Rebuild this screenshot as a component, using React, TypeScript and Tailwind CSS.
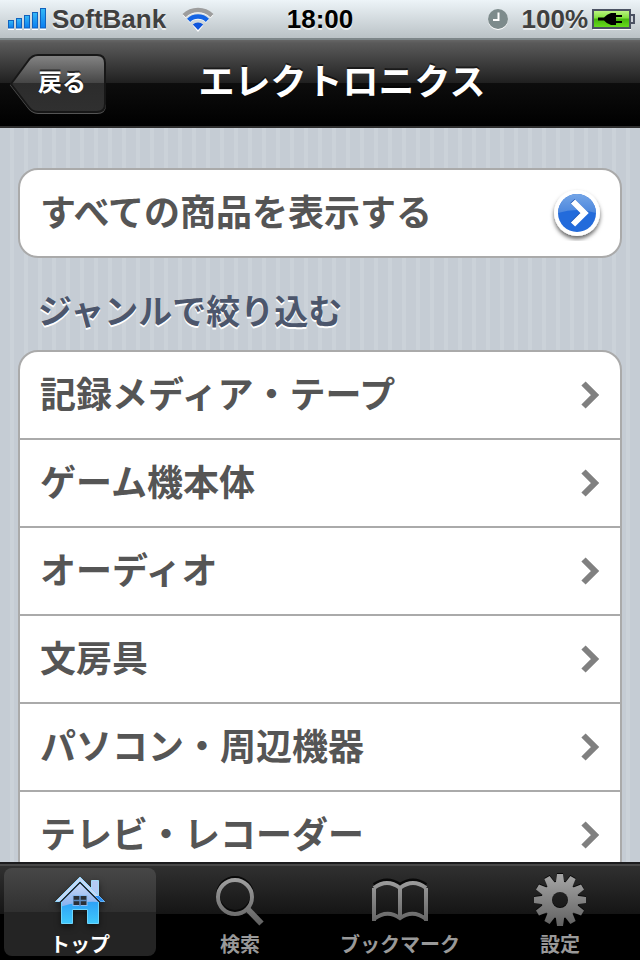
import React, { useState } from 'react';

interface TabItem {
  id: string;
  label: string;
  icon: React.ReactNode;
}

const SignalIcon: React.FC = () => (
  <svg className="h-6 w-10" viewBox="0 0 40 24" aria-hidden="true">
    <defs>
      <linearGradient id="signal" x1="0" y1="0" x2="0" y2="1">
        <stop offset="0" stopColor="#35b9f6" />
        <stop offset="1" stopColor="#0a7df0" />
      </linearGradient>
    </defs>
    {[8, 10, 13, 16, 20].map((h, i) => (
      <g key={h}>
        <rect x={i * 8} y={23 - h} width="6" height={h} fill="#fff" />
        <rect x={i * 8 + 0.5} y={21.5 - h} width="5" height={h - 0.5} fill="url(#signal)" stroke="#1262bd" />
      </g>
    ))}
  </svg>
);

const WifiIcon: React.FC = () => (
  <svg className="h-7 w-8" viewBox="0 0 32 28" fill="none" aria-hidden="true">
    <g stroke="#fff" strokeWidth="4" transform="translate(0 1)">
      <path d="M2.1 10.6A20 20 0 0 1 29.9 10.6" />
      <path d="M6.6 15.3A13.500 13.500 0 0 1 25.4 15.3" />
      <path d="M10.8 19.6A7.500 7.500 0 0 1 21.2 19.6L16 26Z" fill="#fff" stroke="none" />
    </g>
    <path d="M2.1 10.6A20 20 0 0 1 29.9 10.6" stroke="#9d9d9d" strokeWidth="4.500" />
    <path d="M6.6 15.3A13.500 13.500 0 0 1 25.4 15.3" stroke="#1464e4" strokeWidth="4.500" />
    <path d="M10.8 19.6A7.500 7.500 0 0 1 21.2 19.6L16 25Z" fill="#0f55dc" />
  </svg>
);

const ClockIcon: React.FC = () => (
  <svg className="h-6 w-6" viewBox="0 0 24 24" aria-hidden="true">
    <circle cx="12" cy="13" r="10" fill="#fff" />
    <circle cx="12" cy="12" r="10" fill="#7d8b8c" />
    <path d="M12.500 5.500V13H7" fill="none" stroke="#fff" strokeWidth="2" />
  </svg>
);

const BatteryIcon: React.FC = () => (
  <svg className="h-6 w-11" viewBox="0 0 44 24" aria-hidden="true">
    <defs>
      <linearGradient id="battery" x1="0" y1="0" x2="0" y2="1">
        <stop offset="0" stopColor="#c3f58a" />
        <stop offset="0.45" stopColor="#7fe03a" />
        <stop offset="0.5" stopColor="#45b40d" />
        <stop offset="1" stopColor="#6be01e" />
      </linearGradient>
    </defs>
    <path d="M1 22.500H39" stroke="#fff" />
    <rect x="1" y="3" width="37" height="18" fill="url(#battery)" stroke="#4b5263" strokeWidth="2" />
    <path d="M39 8H42V16H39" fill="#cfd4da" stroke="#4b5263" strokeWidth="2" />
    <path d="M6 10.500H12Q15 7 19 6H24V8H30V10H24V14H30V16H24V18H19Q15 17 12 13.500H6Z" />
  </svg>
);

const ChevronIcon: React.FC = () => (
  <svg className="h-7 w-5" viewBox="0 0 20 28" fill="none" aria-hidden="true">
    <path d="M3.500 2.500L15 14L3.500 25.500" stroke="#808080" strokeWidth="6" />
  </svg>
);

const DisclosureIcon: React.FC = () => (
  <svg className="h-14 w-14" viewBox="0 0 56 56" aria-hidden="true">
    <defs>
      <linearGradient id="gloss" x1="0" y1="0" x2="0" y2="1">
        <stop offset="0" stopColor="#74a5e6" />
        <stop offset="1" stopColor="#4b86dd" />
      </linearGradient>
      <filter id="drop" x="-20%" y="-20%" width="140%" height="150%">
        <feDropShadow dx="0" dy="3" stdDeviation="2" floodColor="#000" floodOpacity="0.6" />
      </filter>
    </defs>
    <circle cx="28" cy="28" r="23" fill="#fff" filter="url(#drop)" />
    <circle cx="28" cy="28" r="19" fill="#236bdb" />
    <path d="M9 28A19 19 0 0 1 47 28Q28 22 9 28Z" fill="url(#gloss)" />
    <path d="M23.500 16L35 27.500L23.500 39" fill="none" stroke="#1a4fae" strokeWidth="6" />
    <path d="M24 16.500L35.500 28L24 39.500" fill="none" stroke="#fff" strokeWidth="6" />
  </svg>
);

const HomeIcon: React.FC = () => (
  <svg className="h-14 w-14 shrink-0 drop-shadow-[0_3px_3px_#00000080]" viewBox="0 0 56 56" aria-hidden="true">
    <defs>
      <linearGradient id="home" x1="0" y1="0" x2="0" y2="1">
        <stop offset="0" stopColor="#c9d9f7" />
        <stop offset="1" stopColor="#86b0ee" />
      </linearGradient>
      <linearGradient id="homeLow" x1="0" y1="0" x2="0" y2="1">
        <stop offset="0" stopColor="#1f80f2" />
        <stop offset="1" stopColor="#3fc8fc" />
      </linearGradient>
    </defs>
    <path d="M39.500 8.500H46.500V27L39.500 20Z" fill="#b4caf4" stroke="#a5dcfa" />
    <path d="M28 11.500L46.500 30V51.500H35.500V37.500H20.500V51.500H9.500V30Z" fill="url(#homeLow)" />
    <path d="M28 11.500L46.500 30Q28 29 9.500 34.500V30Z" fill="url(#home)" />
    <path d="M9.500 30V51.500H20.500V37.500H35.500V51.500H46.500V30" fill="none" stroke="#6fd5fc" />
    <path d="M5 31.500L28 9L51 31.500" fill="none" stroke="#22282f" strokeWidth="3" />
    <path d="M3.500 29.500L28 5L52.500 29.500H48.500L28 9L7.500 29.500Z" fill="#c6d7f6" stroke="#93d6fa" />
    <path d="M43 24L48.500 29.500H52.500L47 24Z" fill="#2a8cf3" />
    <rect x="21" y="23.500" width="14" height="10" fill="#2a2f36" stroke="#8cbcf2" />
    <path d="M28 24V34M21 28.500H35" stroke="#5d8bc0" strokeWidth="1.500" />
  </svg>
);

const GlyphGradient: React.FC<{ id: string }> = ({ id }) => (
  <defs>
    <linearGradient id={id} gradientUnits="userSpaceOnUse" x1="0" y1="4" x2="0" y2="52">
      <stop offset="0" stopColor="#a3a3a3" />
      <stop offset="1" stopColor="#626262" />
    </linearGradient>
  </defs>
);

const SearchIcon: React.FC = () => (
  <svg className="h-14 w-14 shrink-0" viewBox="0 0 56 56" fill="none" aria-hidden="true">
    <GlyphGradient id="search" />
    <circle cx="23" cy="23" r="17" stroke="#080808" strokeWidth="4" />
    <path d="M35.500 37L49.500 51.500" stroke="url(#search)" strokeWidth="6" />
    <circle cx="23" cy="25" r="17" stroke="url(#search)" strokeWidth="4" />
  </svg>
);

const BookIcon: React.FC = () => (
  <svg className="h-14 w-14 shrink-0" viewBox="0 0 56 56" fill="none" aria-hidden="true">
    <GlyphGradient id="book" />
    <path d="M2 13Q15 4 28 13Q41 4 54 13" stroke="#080808" strokeWidth="4" />
    <path
      d="M2 49V16M2 16Q15 6 28 16Q41 6 54 16M54 16V49M2 47Q15 37 28 46Q41 37 54 47M28 15V46"
      stroke="url(#book)"
      strokeWidth="4"
    />
  </svg>
);

const TEETH = [0, 30, 60, 90, 120, 150, 180, 210, 240, 270, 300, 330];

const GearIcon: React.FC = () => (
  <svg className="h-14 w-14 shrink-0" viewBox="0 0 56 56" aria-hidden="true">
    <GlyphGradient id="gear" />
    <mask id="gearShape">
      {TEETH.map(angle => (
        <path key={angle} d="M23.500 12L25 1H31L32.500 12Z" fill="#fff" transform={`rotate(${angle} 28 27)`} />
      ))}
      <circle cx="28" cy="27" r="18.500" fill="#fff" />
      <circle cx="28" cy="27" r="8" fill="#000" />
    </mask>
    <g mask="url(#gearShape)">
      <rect width="56" height="56" fill="#080808" />
    </g>
    <g transform="translate(0 1)">
      <rect width="56" height="56" fill="url(#gear)" mask="url(#gearShape)" />
    </g>
  </svg>
);

const genres = [
  '記録メディア・テープ',
  'ゲーム機本体',
  'オーディオ',
  '文房具',
  'パソコン・周辺機器',
  'テレビ・レコーダー',
];

const tabs: TabItem[] = [
  { id: 'top', label: 'トップ', icon: <HomeIcon /> },
  { id: 'search', label: '検索', icon: <SearchIcon /> },
  { id: 'bookmark', label: 'ブックマーク', icon: <BookIcon /> },
  { id: 'settings', label: '設定', icon: <GearIcon /> },
];

const StatusBar: React.FC = () => (
  <div className="grid h-10 shrink-0 grid-cols-[1fr_auto_1fr] items-center border-b-2 border-[#7d8689] bg-linear-to-b from-[#edf4f8] to-[#bac2c6] px-2 font-['Liberation_Sans',Arial,sans-serif] text-[26px] leading-8 font-bold text-[#404040] [text-shadow:0_2px_0_#ffffffb0]">
    <div className="flex items-center">
      <SignalIcon />
      <span className="ml-1">SoftBank</span>
      <span className="ml-4">
        <WifiIcon />
      </span>
    </div>
    <span className="text-black">18:00</span>
    <div className="-mr-1 flex items-center justify-end">
      <ClockIcon />
      <span className="mr-1 ml-3">100%</span>
      <BatteryIcon />
    </div>
  </div>
);

const Header: React.FC = () => (
  <header className="grid h-22 shrink-0 grid-cols-[1fr_auto_1fr] items-center border-b-2 border-[#2e2e2e] bg-[linear-gradient(#666666_0,#5a5a5a_3px,#202020_50%,#0d0d0d_50%,#000000)] px-2 text-white">
    <button type="button" className="relative h-16 w-25 pb-1 pl-2 text-2xl font-bold [text-shadow:0_-2px_0_#00000090]">
      <svg className="absolute inset-0 h-16 w-25" viewBox="0 0 100 64" aria-hidden="true">
        <defs>
          <linearGradient id="back" x1="0" y1="0" x2="0" y2="1">
            <stop offset="0" stopColor="#858585" />
            <stop offset="0.5" stopColor="#444" />
            <stop offset="0.5" stopColor="#2c2c2c" />
            <stop offset="1" stopColor="#303030" />
          </linearGradient>
        </defs>
        <path d="M3 34L20 11Q24 5 30 5H89Q97 5 97 13V54Q97 62 89 62H30Q24 62 20 56Z" fill="none" stroke="#555" strokeWidth="2" />
        <path d="M3 33L20 10Q24 4 30 4H89Q97 4 97 12V53Q97 61 89 61H30Q24 61 20 55Z" fill="url(#back)" stroke="#171717" strokeWidth="2" />
      </svg>
      <span className="relative">戻る</span>
    </button>
    <h1 className="pb-2 pl-11 text-4xl font-bold [text-shadow:0_-2px_0_#00000080]">エレクトロニクス</h1>
  </header>
);

const App: React.FC = () => {
  const [activeTab, setActiveTab] = useState('top');

  return (
    <div className="flex h-screen flex-col overflow-hidden bg-black font-['Noto_Sans_CJK_JP',sans-serif]">
      <StatusBar />
      <Header />

      <main className="min-h-0 flex-1 overflow-hidden bg-[repeating-linear-gradient(90deg,#c5ccd4_0,#c5ccd4_10px,#cbd2d9_10px,#cbd2d9_14px)] px-[18px] pt-10">
        <button
          type="button"
          className="flex h-[90px] w-full items-center justify-between rounded-[20px] border-2 border-[#aaaaaa] bg-white pr-[15px] pl-5 text-4xl font-bold text-[#555555]"
        >
          <span className="pb-1.5">すべての商品を表示する</span>
          <DisclosureIcon />
        </button>

        <h2 className="flex h-23 items-center pt-3 pl-5 text-[34px] leading-10 font-bold text-[#4c566c] [text-shadow:0_2px_0_#ffffff]">
          ジャンルで絞り込む
        </h2>

        <ul className="overflow-hidden rounded-[20px] border-2 border-[#aaaaaa] bg-white">
          {genres.map(genre => (
            <li key={genre} className="border-b-2 border-[#aaaaaa] last:border-b-0">
              <a
                href="#"
                className="flex h-[86px] items-center justify-between pr-5 pl-5 text-4xl font-bold text-[#555555]"
              >
                <span className="pb-1.5">{genre}</span>
                <ChevronIcon />
              </a>
            </li>
          ))}
        </ul>
      </main>

      <nav className="grid h-[98px] shrink-0 grid-cols-4 border-t-2 border-[#1c1c1e] bg-[linear-gradient(#484848_0,#484848_2px,#303030_2px,#151515_50px,#000000_50px)]">
        {tabs.map(tab => (
          <button
            key={tab.id}
            type="button"
            onClick={() => setActiveTab(tab.id)}
            className={`mx-1 mt-1 flex h-22 flex-col items-center rounded-lg pt-1 text-xl leading-8 font-bold ${
              activeTab === tab.id
                ? 'bg-[linear-gradient(#474747,#303030_50%,#242424_50%,#242424)] text-white'
                : 'text-[#999999]'
            }`}
          >
            {tab.icon}
            {tab.label}
          </button>
        ))}
      </nav>
    </div>
  );
};

export default App;
